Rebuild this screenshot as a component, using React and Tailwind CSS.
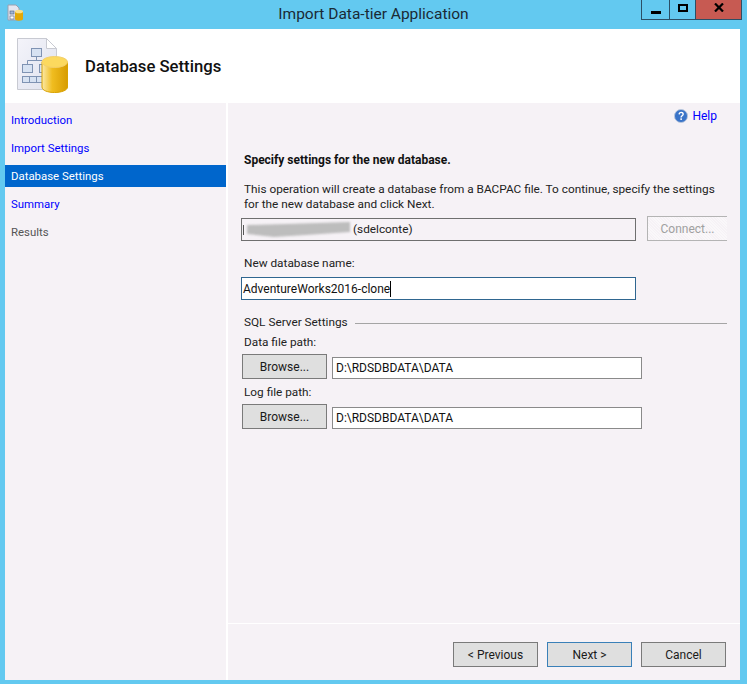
const font = { fontFamily: 'Roboto, "Noto Sans", sans-serif' };

function DbIcon({ small }) {
  if (small) {
    return (
      <svg width="17" height="17" viewBox="0 0 17 17">
        <path d="M1 1h8l3 3v12H1z" fill="#e4e6f0" stroke="#9aa0b0" />
        <rect x="3" y="7" width="4" height="3" fill="#9fb6d8" stroke="#50607a" strokeWidth="0.6" />
        <rect x="3" y="12" width="4" height="3" fill="#fff" stroke="#50607a" strokeWidth="0.6" />
        <path d="M8 7.5v7.5c0 1 1.7 1.7 4 1.7s4-.7 4-1.7V7.5z" fill="#e3a806" />
        <ellipse cx="12" cy="7.5" rx="4" ry="1.8" fill="#fbe08a" />
      </svg>
    );
  }
  return (
    <svg width="54" height="56" viewBox="0 0 54 56">
      <defs>
        <linearGradient id="cyl" x1="0" x2="1" y1="0" y2="0">
          <stop offset="0" stopColor="#fbe9a8" />
          <stop offset="0.4" stopColor="#f0bd20" />
          <stop offset="1" stopColor="#d89c00" />
        </linearGradient>
        <linearGradient id="pg" x1="0" x2="1" y1="0" y2="1">
          <stop offset="0" stopColor="#f4f4fa" />
          <stop offset="1" stopColor="#dfe2ee" />
        </linearGradient>
      </defs>
      <path d="M1.5 1.5h29l10 10v41h-39z" fill="url(#pg)" stroke="#c8cad2" />
      <path d="M30.5 1.5v10h10z" fill="#fff" stroke="#c8cad2" />
      <g fill="#d7e2f2" stroke="#7f93b3" strokeWidth="1">
        <rect x="15.5" y="11.5" width="10" height="8" />
        <rect x="6.5" y="27.5" width="10" height="8" />
        <rect x="23.5" y="27.5" width="10" height="8" />
        <rect x="6.5" y="39.5" width="21" height="6" />
      </g>
      <path d="M20.5 19.5v4M11.5 27v-3.500h17V27M13.500 39.500v6M20.500 39.500v6" stroke="#7f93b3" fill="none" />
      <path d="M26 25v25c0 3.500 6 5.500 12.500 5.500S51.500 53.500 51.500 50V25z" fill="url(#cyl)" stroke="#d9a200" strokeWidth="1" />
      <ellipse cx="38.700" cy="25" rx="12.800" ry="5.500" fill="#fcd95e" stroke="#f3cf6a" />
    </svg>
  );
}

function WinButton({ children, className = '' }) {
  return (
    <button className={`h-full flex items-center justify-center border-l border-[#2b4f66] ${className}`}>
      {children}
    </button>
  );
}

function Btn({ children, className = 'border-[#7a7a7a]' }) {
  return (
    <button className={`w-[85px] h-[25px] bg-[#dfdfdf] border text-[12px] text-[#1a1a1a] ${className}`}>
      {children}
    </button>
  );
}

function PathRow({ label }) {
  return (
    <div className="flex flex-col">
      <div className="pl-[3px] h-[18px] leading-[18px]">{label}</div>
      <div className="flex gap-[5px] mt-[3px] ml-px items-end">
        <Btn>Browse...</Btn>
        <div className="w-[310px] h-[22px] bg-white border border-[#8a8a8a] pl-[3px] leading-[20px] text-[12px] text-[#111]">D:\RDSDBDATA\DATA</div>
      </div>
    </div>
  );
}

export default function App() {
  return (
    <div className="w-[747px] h-[684px] bg-[#63c9f0] flex flex-col text-[11.8px] text-[#222] overflow-hidden" style={font}>
      <div className="h-[29px] shrink-0 flex">
        <div className="w-[106px] pl-[7px] pt-[4px]"><DbIcon small /></div>
        <div className="flex-1 text-center text-[15.5px] leading-[28px] text-[#1a2a35]">Import Data-tier Application</div>
        <div className="h-[20px] flex border-b border-r border-[#2b4f66] mr-[5px] w-[101px]">
          <WinButton className="w-[28px]"><span className="block w-[10px] h-[3px] bg-black mt-1.5" /></WinButton>
          <WinButton className="w-[26px]"><span className="block w-[10px] h-[8px] border-2 border-black -mt-1" /></WinButton>
          <WinButton className="flex-1 bg-[#c75a52]">
            <svg width="10" height="9" viewBox="0 0 10 9" className="-mt-1"><path d="M1 .5l8 8M9 .5l-8 8" stroke="#000" strokeWidth="2.200" /></svg>
          </WinButton>
        </div>
      </div>

      <div className="flex-1 flex flex-col ml-[5px] mr-[7px] mb-[4px] min-h-0">
        <div className="h-[74px] shrink-0 bg-white flex items-center">
          <div className="ml-[11px] -mt-[2px]"><DbIcon /></div>
          <div className="ml-[15px] text-[16.7px] font-medium text-[#111] mt-[1px]">Database Settings</div>
        </div>

        <div className="flex-1 flex min-h-0 bg-white">
          <div className="w-[221px] shrink-0 bg-[#f6f2f6] pt-[3px] text-[11.4px]">
            <div className="h-[28px] pl-[6px] leading-[28px] text-[#0000ff]">Introduction</div>
            <div className="h-[28px] pl-[6px] leading-[28px] text-[#0000ff]">Import Settings</div>
            <div className="h-[22px] my-[3px] pl-[6px] leading-[22px] bg-[#0066cc] text-white">Database Settings</div>
            <div className="h-[28px] pl-[6px] leading-[28px] text-[#0000ff]">Summary</div>
            <div className="h-[28px] pl-[6px] leading-[28px] text-[#555]">Results</div>
          </div>

          <div className="flex-1 ml-[2px] flex flex-col min-w-0">
            <div className="flex-1 bg-[#f6f2f6] pl-[13px] pr-[13px] pt-[5px]">
              <div className="flex justify-end items-center gap-[4px] h-[16px]">
                <svg width="14" height="14" viewBox="0 0 15 15">
                  <circle cx="7.500" cy="7.500" r="7" fill="#3a74c8" stroke="#b8c6dc" />
                  <path d="M5.500 5.800c.2-3 4.500-2.800 4.300-.1-.1 1.500-2.200 1.700-2.200 3.300" fill="none" stroke="#fff" strokeWidth="1.500" />
                  <rect x="6.800" y="10" width="1.700" height="1.700" fill="#fff" />
                </svg>
                <span className="text-[#0000ff] text-[12px] mr-[10px]">Help</span>
              </div>

              <div className="pl-[3px] mt-[27px] font-bold text-[12px] text-[#111] h-[18px] leading-[18px]">Specify settings for the new database.</div>
              <div className="pl-[3px] mt-[13px] leading-[15px] whitespace-nowrap">
                This operation will create a database from a BACPAC file. To continue, specify the settings
                <br />
                for the new database and click Next.
              </div>

              <div className="flex mt-[5px] items-start">
                <div className="w-[395px] h-[23px] mt-[1px] border border-[#6f6f6f] flex items-center pl-px">
                  <span className="w-px h-[10px] bg-[#555]" />
                  <svg width="104" height="16" viewBox="0 0 104 16" className="ml-[2px] blur-[1px]">
                    <path d="M1 3L40 2L104 0V10L60 13L28 15L1 12Z" fill="#bdbdbd" />
                  </svg>
                  <span className="ml-[3px] leading-none">(sdelconte)</span>
                </div>
                <button className="ml-[11px] w-[80px] h-[25px] -mt-[1px] bg-[repeating-linear-gradient(45deg,#f6f2f6_0,#f6f2f6_1px,#faf8fa_1px,#faf8fa_2px)] border border-r-0 border-[#b4b4b4] text-[#a0a0a0] text-[12px]">Connect...</button>
              </div>

              <div className="pl-[3px] mt-[13px] h-[18px] leading-[18px]">New database name:</div>
              <div className="w-[395px] h-[23px] mt-[5px] bg-white border border-[#2f6690] flex items-center pl-px text-[12px] text-[#111]">
                AdventureWorks2016-clone<span className="w-px h-[16px] bg-black" />
              </div>

              <div className="flex items-center mt-[14px] h-[18px] pl-[3px]">
                <span className="shrink-0">SQL Server Settings</span>
                <span className="flex-1 h-px bg-[#a5a5a5] ml-[7px]" />
              </div>
              <div className="mt-[1px]"><PathRow label="Data file path:" /></div>
              <div className="mt-[4px]"><PathRow label="Log file path:" /></div>
            </div>
            <div className="h-px bg-white shrink-0" />
            <div className="h-[56px] shrink-0 bg-[#f6f2f6] flex justify-end gap-[9px] pt-[18px] pr-[14px]">
              <Btn>&lt; Previous</Btn>
              <Btn className="border-[#3a80b8]">Next &gt;</Btn>
              <Btn>Cancel</Btn>
            </div>
          </div>
        </div>
      </div>
    </div>
  );
}
